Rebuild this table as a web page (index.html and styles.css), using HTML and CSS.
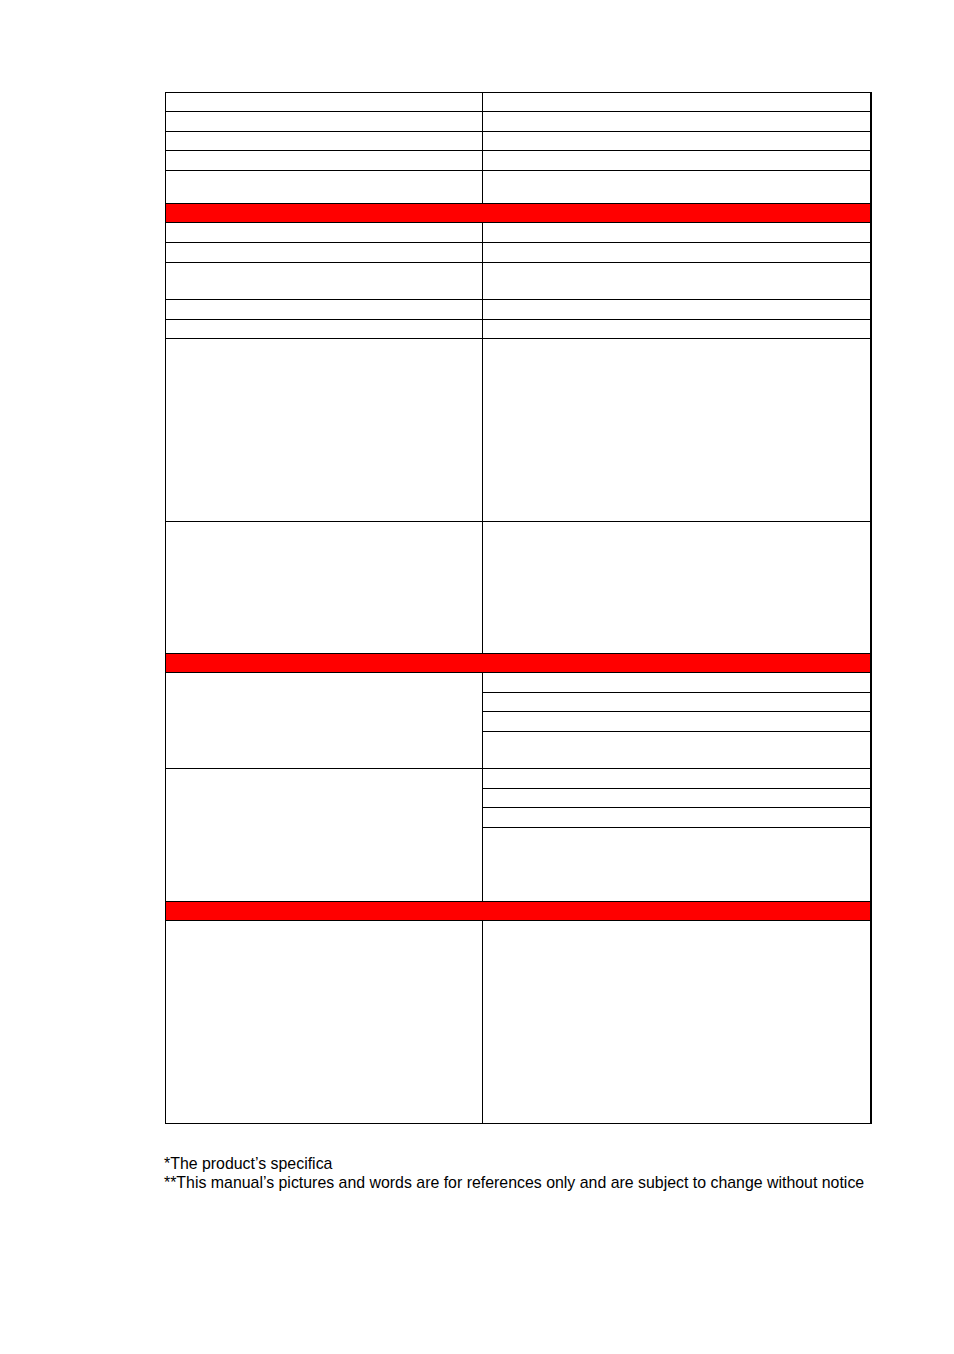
FILE: index.html
```html
<!DOCTYPE html>
<html lang="en">
<head>
<meta charset="utf-8">
<title>Specifications</title>
<link rel="stylesheet" href="styles.css">
</head>
<body>
<div class="page">
  <div class="spec">
    <div class="c l"></div><div class="c r"></div>
    <div class="c l"></div><div class="c r"></div>
    <div class="c l"></div><div class="c r"></div>
    <div class="c l"></div><div class="c r"></div>
    <div class="c l"></div><div class="c r"></div>
    <div class="c band"></div>
    <div class="c l"></div><div class="c r"></div>
    <div class="c l"></div><div class="c r"></div>
    <div class="c l"></div><div class="c r"></div>
    <div class="c l"></div><div class="c r"></div>
    <div class="c l"></div><div class="c r"></div>
    <div class="c l"></div><div class="c r"></div>
    <div class="c l"></div><div class="c r"></div>
    <div class="c band"></div>
    <div class="c l span4"></div><div class="c r"></div>
    <div class="c r"></div>
    <div class="c r"></div>
    <div class="c r"></div>
    <div class="c l span4"></div><div class="c r"></div>
    <div class="c r"></div>
    <div class="c r"></div>
    <div class="c r"></div>
    <div class="c band"></div>
    <div class="c l"></div><div class="c r"></div>
  </div>
  <div class="notes">
    <p>*The product’s specifica</p>
    <p>**This manual’s pictures and words are for references only and are subject to change without notice</p>
  </div>
</div>
</body>
</html>
```

FILE: styles.css
```css
html, body {
  margin: 0;
  padding: 0;
  background: #fff;
}
.page {
  padding: 92px 0 0 165px;
  font-family: "Liberation Sans", Arial, sans-serif;
  color: #000;
}
.spec {
  display: grid;
  width: 707px;
  box-sizing: border-box;
  grid-template-columns: 317px 389px;
  grid-template-rows: 19px 20px 19px 20px 33px 19px 20px 20px 37px 20px 19px 183px 132px 19px 20px 19px 20px 37px 20px 19px 20px 74px 19px 203px;
  border-top: 1px solid #000;
  border-left: 1px solid #000;
}
.c {
  box-sizing: border-box;
  border-bottom: 1px solid #000;
}
.l {
  grid-column: 1;
  border-right: 1px solid #000;
}
.r {
  grid-column: 2;
  border-right: 2px solid #000;
}
.band {
  grid-column: 1 / span 2;
  background: #ff0000;
  border-right: 2px solid #000;
}
.span4 {
  grid-row: span 4;
}
.notes {
  margin-top: 30px;
  margin-left: -1px;
  font-size: 15.9px;
  line-height: 19px;
}
.notes p {
  margin: 0;
}
```
